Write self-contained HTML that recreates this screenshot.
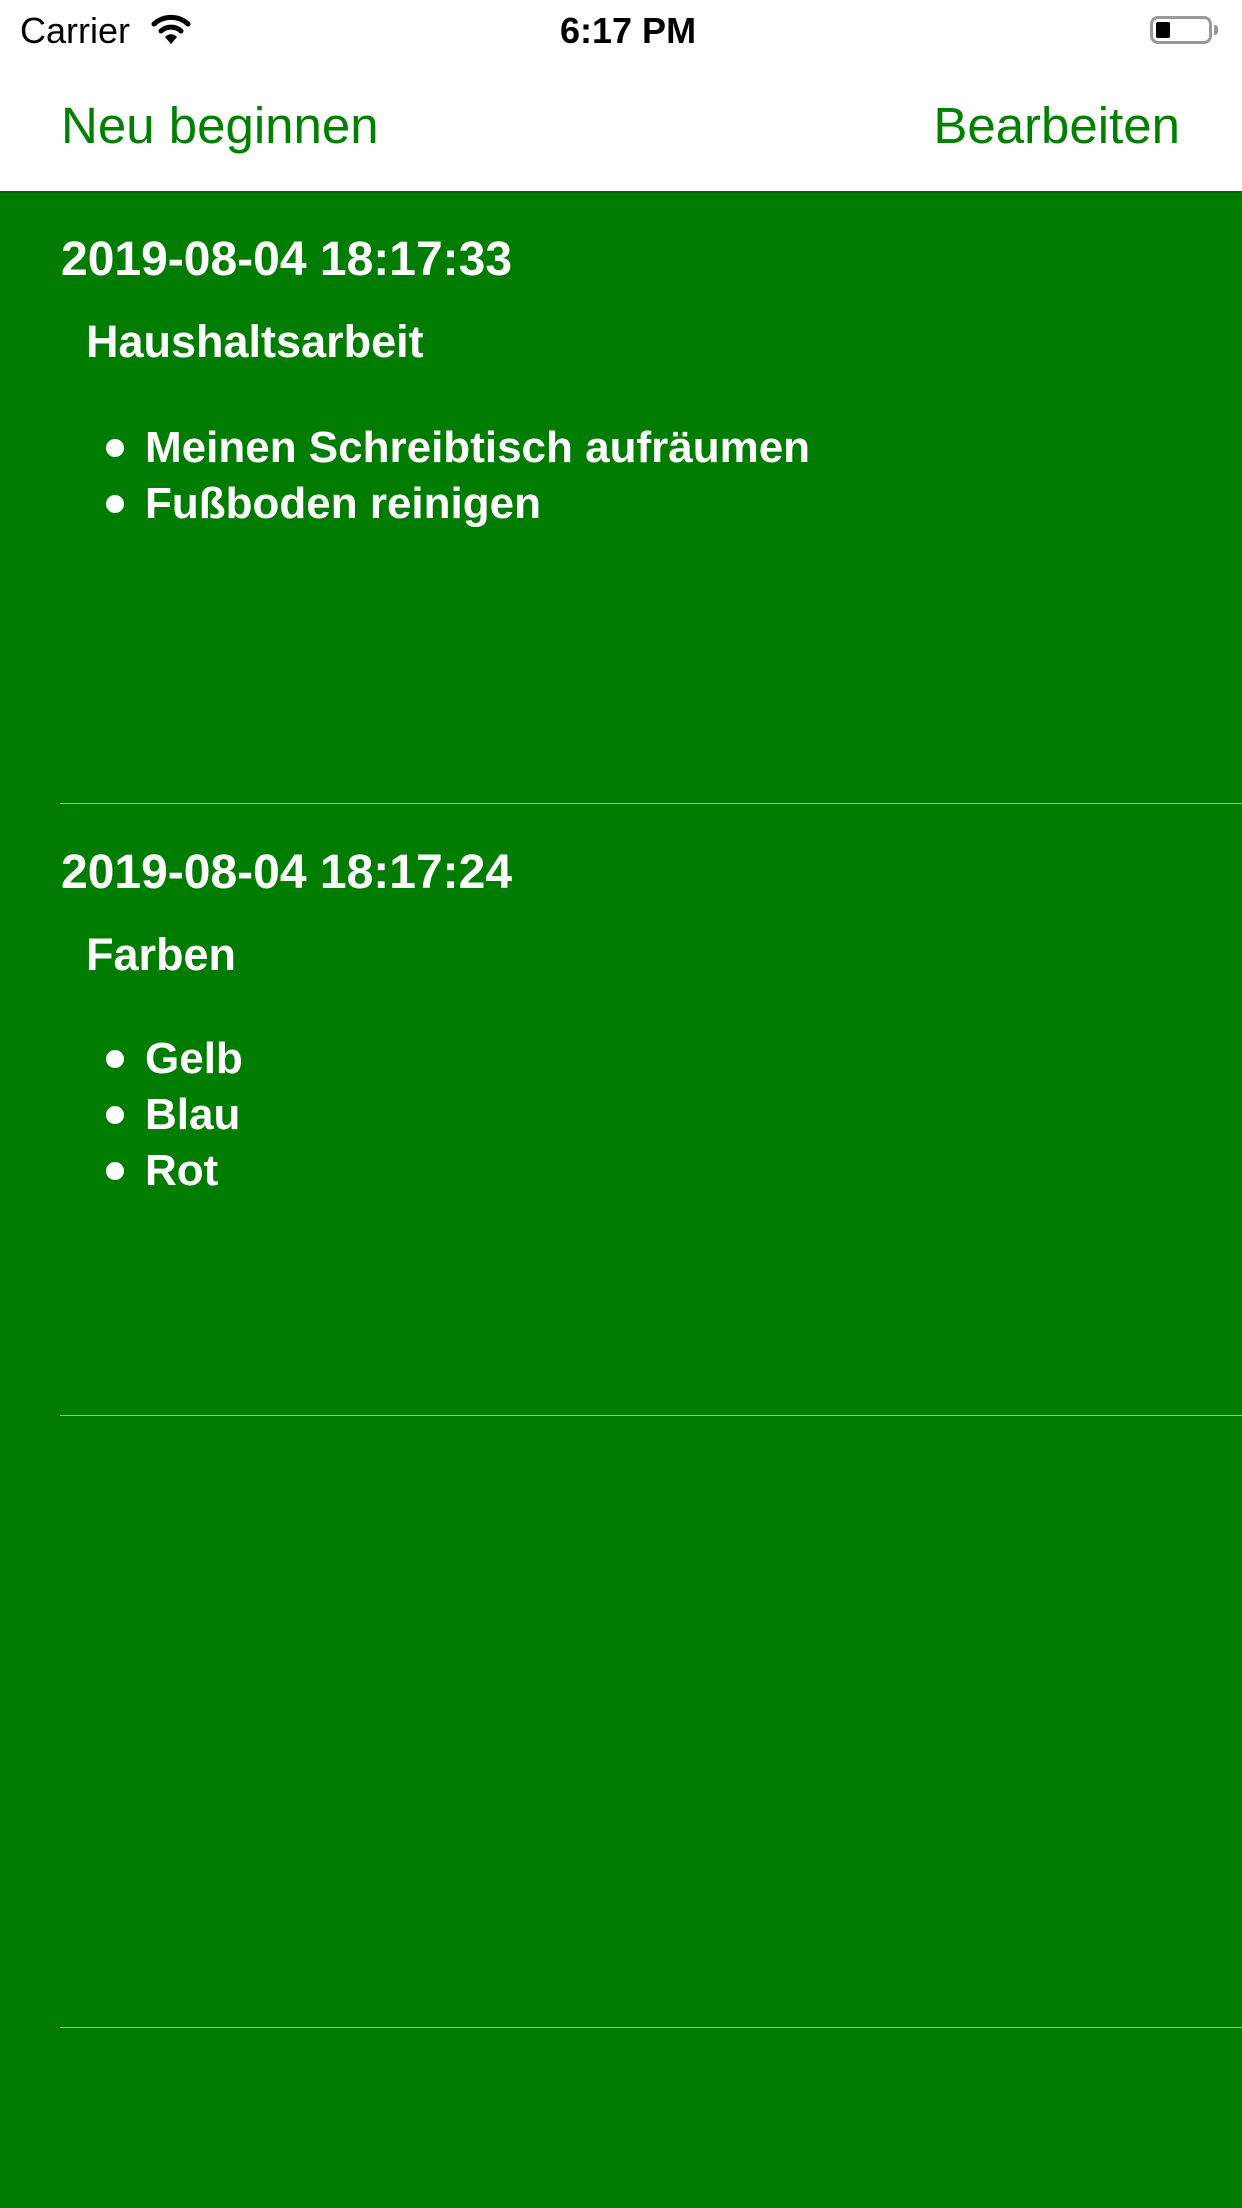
<!DOCTYPE html>
<html><head><meta charset="utf-8"><style>
html,body{margin:0;padding:0}
body{width:1242px;height:2208px;position:relative;overflow:hidden;background:#fff;font-family:"Liberation Sans",sans-serif}
.abs{position:absolute;white-space:nowrap}
#green{position:absolute;left:0;top:191px;width:1242px;height:2017px;background:#007d00;border-top:2px solid #006400;box-sizing:border-box}
.sep{position:absolute;left:60px;right:0;height:1px;background:#8fc48f}
.date{font-weight:bold;font-size:48px;color:#fff;line-height:56px}
.t{font-weight:bold;font-size:44px;color:#fff;line-height:56px}
.dot{position:absolute;width:18px;height:18px;border-radius:50%;background:#fff}
</style></head><body>
<div class="abs" style="left:20px;top:8px;font-size:36px;line-height:46px;color:#000">Carrier</div>
<svg class="abs" style="left:150px;top:12px" width="42" height="34" viewBox="0 0 42 34">
<path d="M4 12 A25 25 0 0 1 38 12" fill="none" stroke="#000" stroke-width="5" stroke-linecap="round"/>
<path d="M11 19 A15 15 0 0 1 31 19" fill="none" stroke="#000" stroke-width="5" stroke-linecap="round"/>
<path d="M21 32 L15 25 A8 8 0 0 1 27 25 Z" fill="#000"/>
</svg>
<div class="abs" style="left:560px;top:8px;font-size:36px;font-weight:bold;line-height:46px;color:#000">6:17 PM</div>
<div class="abs" style="left:1150px;top:16px;width:62px;height:28px;border:3px solid #999;border-radius:8px;box-sizing:border-box"></div>
<div class="abs" style="left:1156px;top:22px;width:14px;height:16px;background:#000;border-radius:2px"></div>
<div class="abs" style="left:1214px;top:25px;width:4px;height:10px;background:#999;border-radius:0 3px 3px 0"></div>
<div class="abs" style="left:61px;top:96px;font-size:51px;line-height:60px;color:#008000">Neu beginnen</div>
<div class="abs" style="right:62px;top:96px;font-size:51px;line-height:60px;color:#008000">Bearbeiten</div>
<div id="green"></div>
<div class="sep" style="top:803px"></div>
<div class="sep" style="top:1415px"></div>
<div class="sep" style="top:2027px"></div>

<div class="abs date" style="left:61px;top:232px">2019-08-04 18:17:33</div>
<div class="abs t" style="font-size:45px;left:86px;top:314px">Haushaltsarbeit</div>
<div class="dot" style="left:106px;top:439px"></div>
<div class="abs t" style="left:145px;top:420px">Meinen Schreibtisch aufräumen</div>
<div class="dot" style="left:106px;top:495px"></div>
<div class="abs t" style="left:145px;top:476px">Fußboden reinigen</div>

<div class="abs date" style="left:61px;top:845px">2019-08-04 18:17:24</div>
<div class="abs t" style="font-size:45px;left:86px;top:927px">Farben</div>
<div class="dot" style="left:106px;top:1050px"></div>
<div class="abs t" style="left:145px;top:1031px">Gelb</div>
<div class="dot" style="left:106px;top:1106px"></div>
<div class="abs t" style="left:145px;top:1087px">Blau</div>
<div class="dot" style="left:106px;top:1162px"></div>
<div class="abs t" style="left:145px;top:1143px">Rot</div>
</body></html>
